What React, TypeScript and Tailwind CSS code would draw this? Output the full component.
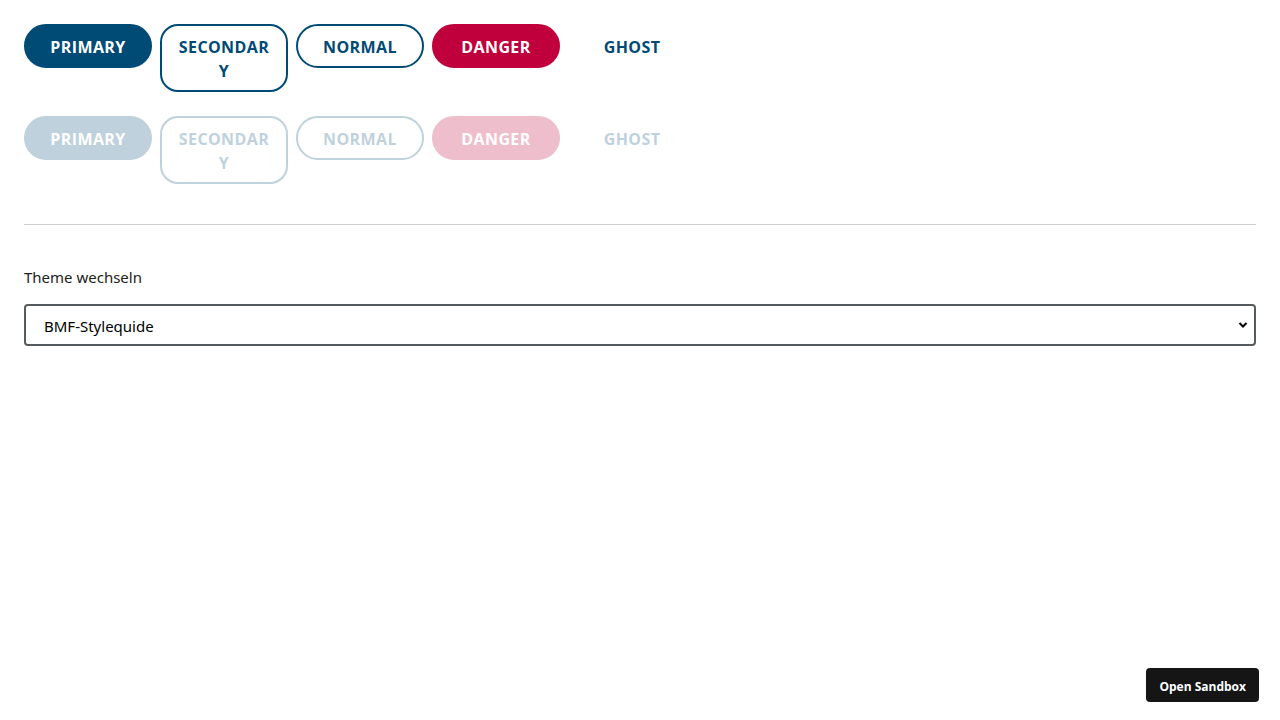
type Variant = 'primary' | 'secondary' | 'normal' | 'danger' | 'ghost'

const variants: Record<Variant, string> = {
  primary: 'bg-[#004b76] border-[#004b76] text-white rounded-[22px]',
  secondary: 'bg-white border-[#004b76] text-[#004b76] rounded-[18px]',
  normal: 'bg-white border-[#004b76] text-[#004b76] rounded-[22px]',
  danger: 'bg-[#c0003c] border-[#c0003c] text-white rounded-[22px]',
  ghost: 'bg-transparent border-transparent text-[#004b76] rounded-[22px]',
}

const labels: [Variant, string][] = [
  ['primary', 'Primary'],
  ['secondary', 'Secondary'],
  ['normal', 'Normal'],
  ['danger', 'Danger'],
  ['ghost', 'Ghost'],
]

function Button(props: { variant: Variant; label: string; disabled?: boolean }) {
  const { variant, label, disabled } = props
  return (
    <button
      disabled={disabled}
      className={`w-[128px] border-2 px-[14px] pt-[9px] pb-[7px] text-[16px] font-bold uppercase leading-[24px] tracking-[0.4px] break-all ${variants[variant]} ${disabled ? 'opacity-25' : ''}`}
    >
      {label}
    </button>
  )
}

export default function App() {
  return (
    <div className="min-h-screen bg-white p-6 font-['Open_Sans',sans-serif] text-[#222]">
      <div className="flex flex-col gap-6">
        <div className="flex items-start gap-2">
          {labels.map(([v, l]) => (
            <Button key={v} variant={v} label={l} />
          ))}
        </div>
        <div className="flex items-start gap-2">
          {labels.map(([v, l]) => (
            <Button key={v} variant={v} label={l} disabled />
          ))}
        </div>
      </div>

      <hr className="mt-10 border-t border-[#cccccc]" />

      <label className="mt-[43px] block font-['Noto_Sans',sans-serif] text-[15px] leading-[18px] text-[#222]">
        Theme wechseln
      </label>
      <div className="relative mt-[18px]">
        <select className="h-[42px] w-full appearance-none rounded-[4px] border-2 border-[#555b5e] bg-white pl-[18px] pt-[3px] font-['Noto_Sans',sans-serif] text-[15px] text-black">
          <option>BMF-Stylequide</option>
        </select>
        <svg
          className="pointer-events-none absolute right-[8px] top-[17px]"
          width="10"
          height="8"
          viewBox="0 0 10 8"
        >
          <path d="M1.5 2 L5 5.5 L8.5 2" fill="none" stroke="#000" strokeWidth="2" />
        </svg>
      </div>

      <button className="fixed bottom-[18px] right-[21px] flex h-[34px] items-center rounded-[4px] bg-[#151515] px-[13px] pt-[3px] font-['Open_Sans',sans-serif] text-[12px] font-bold text-white">
        Open Sandbox
      </button>
    </div>
  )
}
